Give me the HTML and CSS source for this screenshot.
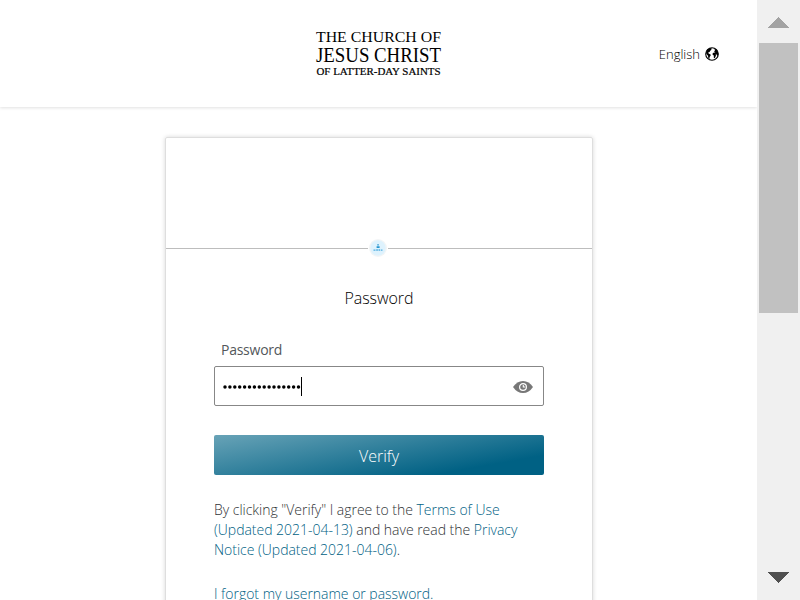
FILE: index.html
```
<!DOCTYPE html>
<html lang="en">
<head>
<meta charset="utf-8">
<title>Sign in</title>
<link rel="stylesheet" href="styles.css">
</head>
<body>
<div class="window">
  <div class="page">
    <header class="header">
      <svg class="logo" width="130" height="50" viewBox="0 0 130 50" aria-label="The Church of Jesus Christ of Latter-day Saints">
        <text x="2" y="14.3" font-size="14" textLength="125" lengthAdjust="spacingAndGlyphs">THE CHURCH OF</text>
        <text x="2" y="33.5" font-size="20" textLength="125" lengthAdjust="spacingAndGlyphs">JESUS CHRIST</text>
        <text class="logo-small" x="2.5" y="46.6" font-size="9.4" textLength="124" lengthAdjust="spacingAndGlyphs">OF LATTER-DAY SAINTS</text>
      </svg>
      <div class="language">
        <span>English</span>
        <svg width="14" height="14" viewBox="0 0 14 14">
          <circle cx="7" cy="7" r="6.3" fill="#fff" stroke="#000" stroke-width="1.1"/>
          <path d="M1 5.5 2.2 2.8 4.6 1.2 7 .9 6 2.1 6.6 2.8 5.2 3.7 4.6 5 3.2 5.4 3.6 6.4 5.6 7.4 5.6 8.8 4.6 10 4.4 12 3.3 11.2 3 8.8 1.4 7ZM9.3 1.2 11.7 2.7 13 5 13.2 7.6 12.3 9.4 11.6 7.4 10.8 7.2 10.9 8.8 9.8 11.2 8.8 10.8 8.8 8.6 7.6 7.8 7.7 6.2 9 5.4 10.4 5.6 9 4.3 10 3.4Z"/>
        </svg>
      </div>
    </header>
    <main class="card">
      <div class="card-top">
        <div class="beacon">
          <svg width="20" height="20" viewBox="0 0 20 20">
            <circle cx="10" cy="10" r="9" fill="#f3f5f6"/>
            <circle cx="10" cy="10" r="7.7" fill="#def2fd"/>
            <path fill="#2495cf" d="M9.3 6.2h1.5v1.3H9.3zM8.6 8.2h3v1.7h-3z"/>
            <path fill="#51aee0" d="M5.5 11.6h2v1.1h-2zM8.2 11.3h1.7v1.5H8.2zM10.5 11.3h1.6v1.5h-1.6zM12.8 11.6h1.7v1.1h-1.7z"/>
          </svg>
        </div>
      </div>
      <form class="content">
        <h1>Password</h1>
        <label>Password</label>
        <div class="field">
          <svg class="dots" width="78" height="6" viewBox="0 0 78 6"><path d="M2 3H76" stroke="#000" stroke-width="3.5" stroke-linecap="round" stroke-dasharray="0 4.9"/></svg><span class="caret"></span>
          <svg class="eye" width="20" height="12" viewBox="0 0 20 12">
            <path fill="#777" d="M0 6Q4 0 10 0T20 6Q16 12 10 12T0 6Z"/>
            <circle cx="10" cy="6" r="3.4" fill="#777" stroke="#fff" stroke-width="1.2"/>
            <path d="M10.3 4V6h2" fill="none" stroke="#fff" stroke-width="1.1"/>
          </svg>
        </div>
        <button type="button">Verify</button>
        <p class="terms">By clicking "Verify" I agree to the <a>Terms of Use<br>(Updated 2021-04-13)</a> and have read the <a>Privacy<br>Notice (Updated 2021-04-06)</a>.</p>
        <p class="forgot"><a>I forgot my username or password.</a></p>
      </form>
    </main>
  </div>
  <aside class="scrollbar">
    <svg class="arrow" width="22" height="11" viewBox="0 0 22 11" shape-rendering="crispEdges"><path fill="#a3a3a3" d="M0 11 10.5 0 21 11Z"/></svg>
    <div class="thumb"></div>
    <svg class="arrow" width="22" height="11" viewBox="0 0 22 11" shape-rendering="crispEdges"><path fill="#505050" d="M0 0H21L10.5 11Z"/></svg>
  </aside>
</div>
</body>
</html>
```

FILE: styles.css
```
* { box-sizing: border-box; }
body { margin: 0; font-family: "Open Sans", sans-serif; font-weight: 300; background: #fff; }
.window { display: flex; width: 800px; height: 600px; overflow: hidden; }
.page { width: 757px; height: 600px; overflow: hidden; }
.header { height: 107px; display: grid; grid-template-columns: 1fr 130px 1fr; align-items: start; padding-top: 28px; box-shadow: 0 1px 3px rgba(0,0,0,.12); }
.logo { grid-column: 2; display: block; font-family: "Liberation Serif", serif; font-weight: 400; fill: #000; }
.logo-small { stroke: #000; stroke-width: .2px; }
.language { display: flex; align-items: center; justify-content: flex-end; gap: 5px; padding-right: 38px; margin-top: 16px; height: 20px; font-size: 13px; color: #000; }
.card { width: 428px; height: 700px; margin: 30px 0 0 165px; border: 1px solid #dedede; border-radius: 2px; box-shadow: 0 0 4px rgba(0,0,0,.16); }
.card-top { height: 111px; border-bottom: 1px solid #bdbdbd; display: flex; justify-content: center; align-items: flex-end; }
.beacon { height: 20px; margin: 0 2px -10px 0; background: #fff; width: 20px; }
.beacon svg { display: block; }
.content { padding: 0 48px; }
h1 { margin: 38px 0 0; font-size: 16px; line-height: 22px; font-weight: 300; letter-spacing: -.05px; text-align: center; color: #000; }
label { display: block; margin: 31px 0 0 7px; font-size: 14px; line-height: 20px; font-weight: 400; color: #53575b; letter-spacing: -.25px; }
.field { height: 40px; margin-top: 6px; border: 1px solid #878787; border-radius: 2px; display: flex; align-items: center; padding: 0 10px 0 8px; }
.dots { margin-top: 1px; }
.caret { width: 1px; height: 19px; background: #000; }
.eye { margin: 2px 0 0 auto; }
button { display: block; width: 100%; height: 40px; margin-top: 29px; padding: 2px 0 0; border: 0; border-radius: 2px; background: linear-gradient(170deg, #68a3b7 0%, #006184 80%); font: 300 16px "Open Sans", sans-serif; color: #fff; }
.terms, .forgot { margin: 25px 0 0; font-size: 14px; line-height: 20px; letter-spacing: -.02px; color: #303336; white-space: nowrap; }
.forgot { margin-top: 24px; }
a { color: #006184; }
.scrollbar { width: 43px; height: 600px; background: #f0f0f0; display: flex; flex-direction: column; align-items: center; padding-top: 17px; }
.arrow { display: block; flex: none; }
.thumb { width: 39px; height: 270px; margin: 15px 0 259px; background: #c1c1c1; flex: none; }
```
